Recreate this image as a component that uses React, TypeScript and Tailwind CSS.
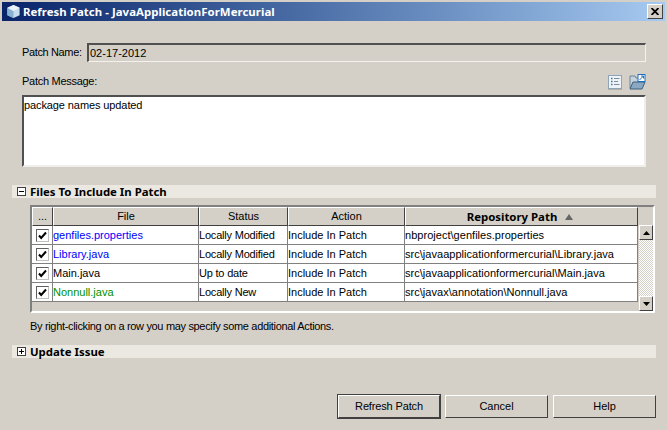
import React from "react";

const rows = [
  { file: "genfiles.properties", color: "text-[#0000ff]", status: "Locally Modified", path: "nbproject\\genfiles.properties" },
  { file: "Library.java", color: "text-[#0000ff]", status: "Locally Modified", path: "src\\javaapplicationformercurial\\Library.java" },
  { file: "Main.java", color: "text-[#000000]", status: "Up to date", path: "src\\javaapplicationformercurial\\Main.java" },
  { file: "Nonnull.java", color: "text-[#008f00]", status: "Locally New", path: "src\\javax\\annotation\\Nonnull.java" },
];

const cols = "grid grid-cols-[21px_146px_89px_117px_233px]";
const head = "h-[19px] flex items-center justify-center border-t border-l border-t-white border-l-white border-r border-b border-r-[#404040] border-b-[#404040]";
const raised = "border border-t-white border-l-white border-r-[#404040] border-b-[#404040] bg-[#d4d0c8]";
const cell = "h-[19px] flex items-center overflow-hidden whitespace-nowrap border-r border-b border-[#808080]";
const bold = "font-bold text-[11.4px] [font-family:'Noto_Sans',sans-serif]";

function Expander({ plus }: { plus?: boolean }) {
  return (
    <svg width="9" height="9" viewBox="0 0 9 9" className="shrink-0">
      <rect x="0.5" y="0.5" width="8" height="8" fill="#fff" stroke="#404040" />
      <path d={plus ? "M2 4.5H7M4.5 2V7" : "M2 4.5H7"} stroke="#000" />
    </svg>
  );
}

function Check() {
  return (
    <div className="w-[13px] h-[13px] bg-white border border-t-[#606060] border-l-[#606060] border-r-[#c0c0c0] border-b-[#c0c0c0] flex items-center justify-center">
      <svg width="9" height="9" viewBox="0 0 9 9">
        <path d="M1 4.5L3.2 7L8 1.5" fill="none" stroke="#000" strokeWidth="2" />
      </svg>
    </div>
  );
}

function Button({ children, primary }: { children: React.ReactNode; primary?: boolean }) {
  return (
    <div
      className={
        "h-[23px] flex items-center justify-center border border-t-white border-l-white border-r-[#404040] border-b-[#404040] " +
        (primary ? "w-[102px] outline outline-1 outline-[#404040]" : "w-[103px]")
      }
    >
      {children}
    </div>
  );
}

export default function App() {
  return (
    <div
      className="w-[667px] h-[430px] bg-[#d4d0c8] text-[11px] leading-[13px] text-[#000000] overflow-hidden pt-[2px]"
      style={{ fontFamily: '"Liberation Sans", Arial, sans-serif' }}
    >
      <div className="ml-[2px] mr-[2px] h-[19px] flex items-center bg-gradient-to-r from-[#0a246a] to-[#a6caf0] pl-[4px] pr-[2px]">
        <svg width="15" height="15" viewBox="0 0 16 16" className="shrink-0 mr-[2px]">
          <path d="M8 1L14.5 4V12L8 15L1.5 12V4Z" fill="#c9dcec" />
          <path d="M8 7.5V15L1.5 12V4Z" fill="#86b1d3" />
          <path d="M8 7.5L14.5 4L8 1L1.5 4Z" fill="#eaf2f9" />
        </svg>
        <span className={"text-white flex-1 tracking-[0.05px] " + bold}>Refresh Patch - JavaApplicationForMercurial</span>
        <div className={"w-[16px] h-[15px] flex items-center justify-center " + raised}>
          <svg width="8" height="7" viewBox="0 0 8 7">
            <path d="M0.5 0L7.5 7M7.5 0L0.5 7" stroke="#000" strokeWidth="1.8" />
          </svg>
        </div>
      </div>

      <div className="ml-[22px] mr-[21px] mt-[22px] flex items-center">
        <span className="w-[65px] shrink-0 whitespace-nowrap tracking-[-0.36px]">Patch Name:</span>
        <div className="flex-1 h-[19px] flex items-center pl-px border-2 border-t-[#505050] border-l-[#505050] border-r-[#f4f2ee] border-b-[#f4f2ee] border-r border-b">02-17-2012</div>
      </div>

      <div className="ml-[22px] mr-[21px] mt-[12px] flex items-center justify-between h-[16px]">
        <span className="tracking-[-0.28px] -mt-[1px]">Patch Message:</span>
        <div className="flex items-center gap-[7px]">
          <svg width="14" height="15" viewBox="0 0 14 15">
            <rect x="0.5" y="0.5" width="13" height="13" fill="#eef3f8" stroke="#8fa5b8" />
            <path d="M3 3.5H4.5M3 6.5H4.5M3 9.5H4.5" stroke="#52708a" strokeWidth="1.5" />
            <path d="M6 3.5H11.5M6 6.5H10M6 9.5H11.5" stroke="#7d8f9f" />
            <path d="M0 14.5H14" stroke="#b4b0a8" />
          </svg>
          <svg width="17" height="16" viewBox="0 0 17 16">
            <path d="M1 14V2H6L7 4H12V14Z" fill="#c5d3df" stroke="#6b8298" />
            <path d="M1 15L4 8H16L13 15Z" fill="#8aa8c2" stroke="#3f5f7c" />
            <rect x="9" y="0.5" width="7" height="7" fill="#fff" stroke="#1f6fc0" />
            <path d="M10.5 6L14.5 2M12 2H14.5V4.5" stroke="#1f6fc0" fill="none" />
          </svg>
        </div>
      </div>

      <div className="ml-[22px] mr-[21px] mt-[5px] h-[72px] bg-white border-2 border-t-[#505050] border-l-[#505050] border-r-[#f0eeea] border-b-[#f0eeea] pt-[2px] tracking-[-0.1px]">
        package names updated
      </div>

      <div className={"ml-[12px] mr-[11px] mt-[18px] h-[13px] bg-[#ebe8e2] flex items-center pl-[5px] gap-[4px] " + bold}>
        <Expander />
        <span>Files To Include In Patch</span>
      </div>

      <div className="ml-[30px] mr-[12px] mt-[7px] h-[108px] flex border-2 border-t-[#808080] border-l-[#808080] border-r-white border-b-white">
        <div className="w-[606px] shrink-0">
          <div className={cols}>
            <div className={head}>...</div>
            <div className={head}>File</div>
            <div className={head}>Status</div>
            <div className={head}>Action</div>
            <div className={head + " gap-[8px]"}>
              <span className={bold + " -ml-[3px]"}>Repository Path</span>
              <svg width="8" height="6" viewBox="0 0 8 6">
                <path d="M4 0L8 6H0Z" fill="#666" />
              </svg>
            </div>
          </div>
          {rows.map((r) => (
            <div key={r.file} className={cols + " bg-white"}>
              <div className={cell + " justify-center"}>
                <Check />
              </div>
              <div className={cell + " " + r.color}>{r.file}</div>
              <div className={cell + " tracking-[-0.2px]"}>{r.status}</div>
              <div className={cell}>Include In Patch</div>
              <div className={cell + " tracking-[0.03px]"}>{r.path}</div>
            </div>
          ))}
        </div>
        <div className="flex-1 flex flex-col pt-[18px] pl-px bg-[#d4d0c8]">
          <div className={"h-[15px] flex items-center justify-center " + raised}>
            <svg width="7" height="4" viewBox="0 0 7 4"><path d="M3.5 0L7 4H0Z" fill="#000" /></svg>
          </div>
          <div className="flex-1 bg-[repeating-conic-gradient(#d4d0c8_0_25%,#ffffff_0_50%)] bg-[length:2px_2px]" />
          <div className={"h-[15px] flex items-center justify-center " + raised}>
            <svg width="7" height="4" viewBox="0 0 7 4"><path d="M3.5 4L7 0H0Z" fill="#000" /></svg>
          </div>
        </div>
      </div>

      <div className="ml-[30px] mt-[7px] h-[13px] flex items-center tracking-[-0.33px]">
        By right-clicking on a row you may specify some additional Actions.
      </div>

      <div className={"ml-[12px] mr-[11px] mt-[12px] h-[13px] bg-[#ebe8e2] flex items-center pl-[5px] gap-[4px] " + bold}>
        <Expander plus />
        <span>Update Issue</span>
      </div>

      <div className="mt-[37px] ml-[338px] flex gap-[5px]">
        <Button primary><span className="tracking-[-0.15px]">Refresh Patch</span></Button>
        <Button>Cancel</Button>
        <Button>Help</Button>
      </div>
    </div>
  );
}
